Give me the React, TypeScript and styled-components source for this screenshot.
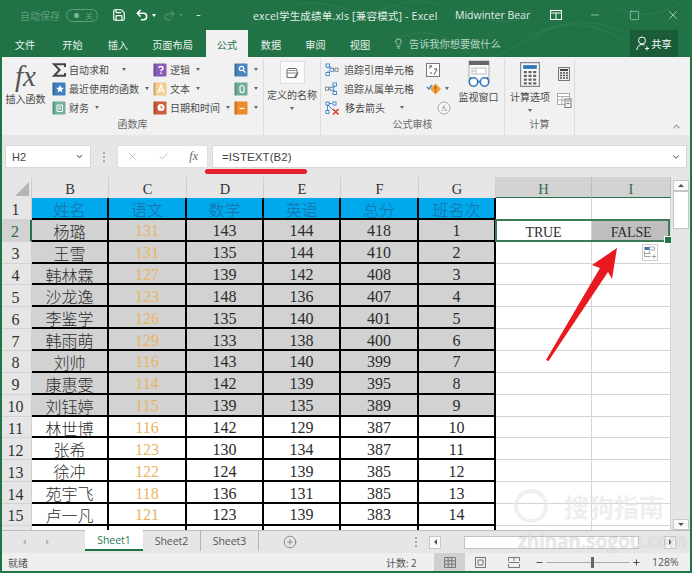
import React from "react";
import styled, { createGlobalStyle } from "styled-components";
import { ChevronDown, ChevronUp, CirclePlus, Lightbulb, Minus, Plus, Save, Undo2, Redo2, X, Check, Square } from "lucide-react";

const UI = `"Noto Sans CJK SC", "Noto Sans", sans-serif`;
const CELL = `"Liberation Serif", "Noto Sans CJK SC", serif`;

const Global = createGlobalStyle`
  html, body { margin: 0; padding: 0; width: 692px; height: 573px; overflow: hidden; background: #217346; }
  * { box-sizing: border-box; }
`;

const Win = styled.div`
  position: relative; width: 692px; height: 573px; background: #217346; padding: 0 2px 2px;
  display: flex; flex-direction: column; overflow: hidden; font-family: ${UI}; color: #444;
`;
const TitleBar = styled.div`
  position: relative; height: 30px; display: flex; align-items: center; color: #fff; font-size: 10.5px; flex: none;
`;
const Dim = styled.span<{ $ml?: number }>`
  color: #5f9d7c; margin-left: ${p => p.$ml ?? 0}px; font-size: 10px; display: inline-flex; align-items: center;
`;
const Toggle = styled.span`
  margin-left: 6px; width: 32px; height: 13px; border: 1px solid #5f9d7c; border-radius: 7px;
  display: inline-flex; align-items: center; padding-left: 7px; gap: 6px; color: #5f9d7c; font-size: 8px;
  &::before { content: ""; width: 5px; height: 5px; background: #7fb598; border-radius: 50%; }
`;
const Qat = styled.span<{ $ml: number; $off?: boolean }>`
  margin-left: ${p => p.$ml}px; display: inline-flex; align-items: center; color: ${p => p.$off ? "#4f9270" : "#fff"}; width: 14px; height: 16px; justify-content: center; flex: none;
`;
const DocTitle = styled.span<{ $w: number; $ml: number }>`
  font-family: "Open Sans", "Noto Sans CJK SC", sans-serif; font-size: 10.5px; color: #e4efe9; white-space: nowrap; flex: none; width: ${p => p.$w}px; margin-left: ${p => p.$ml}px; letter-spacing: .2px;
`;
const User = styled(DocTitle)` letter-spacing: 0; `;
const Swirl = styled.svg`
  position: absolute; left: 230px; top: 0; width: 460px; height: 57px; pointer-events: none;
`;

const TabBar = styled.div`
  height: 27px; display: flex; align-items: stretch; flex: none; color: #fff; font-size: 10.2px; position: relative;
`;
const Tab = styled.div<{ $w: number; $on?: boolean }>`
  width: ${p => p.$w}px; display: flex; align-items: center; justify-content: center; flex: none;
  color: ${p => p.$on ? "#217346" : "#e8f1ec"}; background: ${p => p.$on ? "#f1f1f1" : "transparent"};
  padding-top: 1px;
`;
const Tell = styled.div`
  margin-left: 10px; display: flex; align-items: center; gap: 5px; color: #b9d6c6; font-size: 10.2px; flex: none;
`;
const Share = styled.div`
  margin-left: auto; margin-right: 12px; width: 48px; background: #1a5c38; display: flex; align-items: center; justify-content: center; gap: 2px; color: #fff;
`;

const Ribbon = styled.div`
  height: 78px; background: #f1f1f1; flex: none; display: flex; position: relative; font-size: 10px; color: #4a4a4a; white-space: nowrap;
`;
const Group = styled.div<{ $w: number; $line?: boolean }>`
  width: ${p => p.$w}px; flex: none; display: flex; flex-direction: column; height: 76px;
  border-right: ${p => p.$line ? "1px solid #dcdcdc" : "none"}; margin-top: 2px;
`;
const GroupBody = styled.div`
  flex: 1; display: flex; min-height: 0;
`;
const GroupLabel = styled.div`
  height: 18px; text-align: center; color: #6a6a6a; font-size: 10px; line-height: 14px; flex: none;
`;
const BigBtn = styled.div<{ $w: number }>`
  width: ${p => p.$w}px; flex: none; display: flex; flex-direction: column; align-items: center; line-height: 13px;
`;
const BigLabel = styled.span<{ $mt: number }>`
  margin-top: ${p => p.$mt}px;
`;
const DownCaret = styled.span`
  width: 0; height: 0; border: 2px solid transparent; border-top: 3px solid #666; border-bottom: 0; margin-top: 6px;
`;
const Fx = styled.span`
  font-family: "Liberation Serif", serif; font-style: italic; font-size: 29px; color: #555; line-height: 33px; height: 32px; margin-top: 1px;
`;
const IconSlot = styled.div<{ $h: number }>`
  height: ${p => p.$h}px; display: flex; align-items: center; justify-content: center; flex: none;
`;
const Col = styled.div<{ $w: number; $ml?: number }>`
  width: ${p => p.$w}px; margin-left: ${p => p.$ml ?? 0}px; flex: none; display: flex; flex-direction: column; padding-top: 1px;
`;
const Item = styled.div<{ $gap?: number }>`
  height: 19px; display: flex; align-items: center; gap: ${p => p.$gap ?? 3}px; flex: none;
`;
const IconGap = styled.span<{ $ml?: number }>`
  margin-left: ${p => p.$ml ?? 7}px; display: inline-flex; align-items: center; flex: none;
`;
const Caret = styled.span<{ $ml?: number; $c?: string }>`
  width: 0; height: 0; border: 2px solid transparent; border-top: 3px solid ${p => p.$c ?? "#666"}; border-bottom: 0;
  margin-left: ${p => p.$ml ?? 3}px; flex: none; display: inline-block;
`;
const NameBtn = styled.div`
  width: 25px; height: 23px; background: #fafafa; border: 1px solid #dedede; display: flex; align-items: center; justify-content: center; margin-top: 2px;
`;
const Collapse = styled.div`
  position: absolute; right: 8px; bottom: 3px; color: #555; display: flex;
`;

const FormulaBar = styled.div`
  position: relative; height: 42px; background: #e6e6e6; flex: none; display: flex; padding: 10px 3px 9px 3px; font-size: 11px;
`;
const NameBox = styled.div`
  width: 86px; background: #fff; border: 1px solid #d8d8d8; display: flex; align-items: center; justify-content: space-between; padding: 0 6px; color: #444; font-family: "Liberation Sans", sans-serif; font-size: 11px;
`;
const Grip = styled.div`
  width: 26px; display: flex; align-items: center; justify-content: center; color: #999; font-size: 10px; letter-spacing: 0;
  &::before { content: ""; width: 2px; height: 10px; background: repeating-linear-gradient(#aaa 0 2px, transparent 2px 4px); }
`;
const FxBox = styled.div`
  width: 91px; background: #fff; border: 1px solid #e0e0e0; display: flex; align-items: center; padding: 0 9px; justify-content: space-between; color: #bcbcbc;
`;
const FxMini = styled.span`
  font-family: "Liberation Serif", serif; font-style: italic; color: #666; font-size: 12px;
`;
const Input = styled.div`
  flex: 1; margin-left: 4px; background: #fff; border: 1px solid #d8d8d8; display: flex; align-items: center; justify-content: space-between; padding: 0 5px 0 9px; color: #444;
  font-family: "Liberation Sans", sans-serif; font-size: 11.5px; letter-spacing: .1px;
`;
const RedLine = styled.div`
  position: absolute; left: 203px; bottom: 3px; width: 102px; height: 5px; border-radius: 3px; background: #e3202b;
`;

const SheetWrap = styled.div`
  flex: 1; min-height: 0; display: flex; background: #e6e6e6;
`;
const Grid = styled.div`
  width: 669px; flex: none; display: grid; overflow: hidden; background: #fff; position: relative;
  grid-template-columns: 30px 77px 78px 77px 77px 78px 77px 96px 79px;
  grid-template-rows: 21px;
  grid-auto-rows: 21.86px;
  font-family: ${CELL}; font-size: 16px; color: #2c2c2c;
`;
const Corner = styled.div`
  background: #e6e6e6; position: relative; border-right: 1px solid #cfcfcf;
  &::after { content: ""; position: absolute; right: 2px; bottom: 2px; border-style: solid; border-width: 0 0 14px 14px; border-color: transparent transparent #b5b5b5 transparent; }
`;
const ColHead = styled.div<{ $on?: boolean }>`
  background: ${p => p.$on ? "#d2d2d2" : "#e6e6e6"}; color: ${p => p.$on ? "#2f6b4c" : "#333"};
  border-right: 1px solid ${p => p.$on ? "#bcbcbc" : "#cfcfcf"};
  border-bottom: ${p => p.$on ? "1px solid #217346" : "none"};
  font-size: 14.5px; display: flex; align-items: center; justify-content: center; padding-top: 4px;
`;
const RowHead = styled.div<{ $on?: boolean }>`
  background: ${p => p.$on ? "#d2d2d2" : "#e6e6e6"}; color: ${p => p.$on ? "#2f6b4c" : "#333"};
  border-right: ${p => p.$on ? "2px solid #217346" : "1px solid #cfcfcf"};
  border-bottom: 1px solid #d2d2d2;
  display: flex; align-items: center; justify-content: center; padding: 4px 2px 0 0;
`;
const Cell = styled.div<{ $bg: string; $fg?: string; $cjk?: boolean }>`
  background: ${p => p.$bg}; color: ${p => p.$fg ?? "#2c2c2c"};
  border-right: 2px solid #000; border-bottom: 2px solid #000;
  display: flex; align-items: center; justify-content: center; white-space: nowrap;
  padding-top: ${p => p.$cjk ? 2 : 3}px;
  font-family: ${p => p.$cjk ? UI : CELL}; font-weight: ${p => p.$cjk ? 300 : 400}; line-height: 1;
`;
const Free = styled.div<{ $bg?: string }>`
  position: relative;
  background: ${p => p.$bg ?? "#fff"}; border-right: 1px solid #d4d4d4; border-bottom: 1px solid #d4d4d4;
  display: flex; align-items: center; justify-content: center; font-size: 14px; letter-spacing: -.2px; padding-top: 5px;
`;
const Selection = styled.div`
  position: absolute; left: -1px; top: -1px; width: 175px; height: 23px; z-index: 2; border: 2px solid #3c7a5a; pointer-events: none;
  &::after { content: ""; position: absolute; right: -4px; bottom: -4px; width: 6px; height: 6px; background: #217346; border: 1px solid #fff; }
`;

const VBar = styled.div`
  flex: 1; display: flex; flex-direction: column; padding: 3px 1px 0 2px; background: #e6e6e6;
`;
const ScrollBtn = styled.div`
  width: 100%; height: 11px; background: #fafafa; border: 1px solid #c8c8c8; display: flex; align-items: center; justify-content: center; flex: none;
`;
const Thumb = styled.div`
  height: 38px; background: #fff; border: 1px solid #c4c4c4; flex: none;
`;
const Arrow = styled.span<{ $d: "u" | "d" | "l" | "r" }>`
  width: 0; height: 0; border: 3px solid transparent;
  ${p => p.$d === "u" ? "border-bottom: 3px solid #555; border-top: 0;" : p.$d === "d" ? "border-top: 3px solid #555; border-bottom: 0;" : p.$d === "l" ? "border-right: 3px solid #555; border-left: 0;" : "border-left: 3px solid #555; border-right: 0;"}
`;
const Spacer = styled.div` flex: 1; `;

const TabsRow = styled.div`
  height: 23px; flex: none; background: #e6e6e6; display: flex; align-items: stretch; border-top: 1px solid #bdbdbd; font-size: 10.5px; font-family: "Open Sans", sans-serif; color: #555;
`;
const Nav = styled.div`
  width: 83px; flex: none; display: flex; align-items: center; padding-left: 21px; gap: 20px;
`;
const NavArrow = styled(Arrow)` opacity: .35; `;
const SheetTab = styled.div<{ $on?: boolean }>`
  width: 58px; display: flex; align-items: center; justify-content: center; flex: none; height: 21px; margin-top: -1px;
  background: ${p => p.$on ? "#fff" : "transparent"}; color: ${p => p.$on ? "#2b7a52" : "#555"};
  border-bottom: ${p => p.$on ? "2px solid #217346" : "none"};
  border-right: ${p => p.$on ? "none" : "1px solid #b5b5b5"};
`;
const AddSheet = styled.div`
  margin-left: 24px; display: flex; align-items: center; color: #666;
`;
const HScroll = styled.div`
  margin-left: auto; width: 278px; display: flex; align-items: center; padding: 0 14px 0 0; flex: none;
`;
const HDots = styled(Grip)` width: 8px; height: 12px; margin-right: 9px; flex: none; `;
const HBtn = styled.div`
  width: 12px; height: 13px; background: #fafafa; border: 1px solid #c8c8c8; display: flex; align-items: center; justify-content: center; flex: none;
`;
const HThumb = styled.div`
  margin-left: 23px; width: 175px; height: 13px; background: #fff; border: 1px solid #c4c4c4; flex: none;
`;

const Status = styled.div`
  height: 18px; flex: none; background: #efefef; display: flex; align-items: center; font-size: 10px; color: #555; padding-left: 6px; white-space: nowrap;
`;
const Count = styled.span`
  margin-left: 358px; width: 48px; flex: none;
`;
const ViewBtn = styled.div<{ $on?: boolean; $w: number }>`
  width: ${p => p.$w}px; height: 18px; flex: none; display: flex; align-items: center; justify-content: center; background: ${p => p.$on ? "#d0d0d0" : "transparent"}; color: #777;
`;
const Zoom = styled.div`
  margin-left: 2px; width: 106px; flex: none; display: flex; align-items: center; position: relative; color: #444;
`;
const Track = styled.div`
  position: relative; flex: 1; height: 1px; background: #aaa; margin: 0 2px;
  &::after { content: ""; position: absolute; left: 45px; top: -5px; width: 3px; height: 11px; background: #666; }
`;
const Percent = styled.span`
  margin-left: 11px; font-family: "Open Sans", sans-serif; font-size: 10.5px;
`;

const Mark = styled.div`
  position: absolute; left: 514px; top: 488px; display: flex; align-items: center; gap: 16px; color: rgba(228,228,228,.6); font-size: 25px; font-weight: 700; letter-spacing: 0; pointer-events: none; z-index: 3;
`;
const MarkRing = styled.span`
  width: 34px; height: 34px; border-radius: 50%; border: 4px solid rgba(228,228,228,.55); flex: none;
`;
const MarkUrl = styled.div`
  position: absolute; left: 518px; top: 528px; color: rgba(255,255,255,.7); text-shadow: 0 0 1px rgba(0,0,0,.3); font-family: "Open Sans", sans-serif; font-size: 19px; font-weight: 600; letter-spacing: .2px; pointer-events: none; z-index: 3;
`;
const Red = styled.svg`
  position: absolute; left: 540px; top: 244px; width: 84px; height: 122px; z-index: 4; pointer-events: none;
`;
const PasteOpt = styled.svg`
  position: absolute; left: 642px; top: 244px; width: 16px; height: 17px; z-index: 3;
`;

/* ---------- drawings ---------- */
const Book = ({ c, kind }: { c: string; kind: string }) => (
  <svg width="14" height="14" viewBox="0 0 14 14" style={{ flex: "none" }}>
    <rect x="0.5" y="0.5" width="13" height="13" rx="1" fill={c} />
    <rect x="0.5" y="0.5" width="2" height="13" fill="#000" opacity=".18" />
    {kind === "star" && <path d="M8 3l1.2 2.6 2.6.3-2 1.8.6 2.7L8 9l-2.4 1.4.6-2.7-2-1.8 2.6-.3z" fill="#fff" />}
    {kind === "lines" && <path d="M5 4h5.500v6.500H5zM6.300 6h3M6.300 8h3" fill="none" stroke="#fff" strokeWidth="1" />}
    {kind === "q" && <path d="M6 5c0-2 4-2 4 0 0 1.600-2 1.600-2 3.200M8 9.500v1.600" fill="none" stroke="#fff" strokeWidth="1.500" />}
    {kind === "a" && <path d="M5 11l3-8 3 8M6 8.500h4" fill="none" stroke="#fff" strokeWidth="1.300" />}
    {kind === "clock" && <g><circle cx="8" cy="6.500" r="3.500" fill="#fff" /><path d="M8 4.500v2.300h1.600" fill="none" stroke={c} strokeWidth="1" /></g>}
    {kind === "find" && <g fill="none" stroke="#fff" strokeWidth="1.200"><circle cx="7.500" cy="5.500" r="2.200" /><path d="M9 7.200l2.400 2.400" /></g>}
    {kind === "theta" && <rect x="6" y="3.500" width="4" height="7" rx="2" fill="none" stroke="#fff" strokeWidth="1.100" />}
    {kind === "dash" && <path d="M5.500 7.500h5" stroke="#fff" strokeWidth="1.300" />}
  </svg>
);
const Sigma = () => (
  <svg width="14" height="14" viewBox="0 0 14 14" style={{ flex: "none" }}>
    <path d="M13 4V1.200H2L7.600 7 2 12.800H13V10" fill="none" stroke="#444" strokeWidth="2" />
  </svg>
);
const TraceA = () => (
  <svg width="14" height="14" viewBox="0 0 14 14" style={{ flex: "none" }}>
    <g fill="#fff" stroke="#3b7fc4" strokeWidth=".9"><rect x="1" y="1" width="3.500" height="3" /><rect x="1" y="9.500" width="3.500" height="3" /><rect x="5" y="5.200" width="3.500" height="3" /><rect x="10" y="5.200" width="3" height="3" stroke="#777" /></g>
    <path d="M3 4v1.500M3 9.500V8M4.500 3 6 5" stroke="#3b7fc4" strokeWidth=".9" />
  </svg>
);
const TraceB = () => (
  <svg width="14" height="14" viewBox="0 0 14 14" style={{ flex: "none" }}>
    <g fill="#fff" stroke="#3b7fc4" strokeWidth=".9"><rect x="8" y="1" width="3.500" height="3" /><rect x="8" y="9.500" width="3.500" height="3" /><rect x="5" y="5.200" width="3.500" height="3" /><rect x="0.600" y="5.200" width="3" height="3" stroke="#777" /></g>
    <path d="M9.500 4v1.500M9.500 9.500V8" stroke="#3b7fc4" strokeWidth=".9" />
  </svg>
);
const RemoveArrows = () => (
  <svg width="15" height="14" viewBox="0 0 15 14" style={{ flex: "none" }}>
    <g fill="#fff" stroke="#3b7fc4" strokeWidth=".9"><rect x="1" y="1" width="3" height="3" /><rect x="1" y="9.500" width="3" height="3" /><rect x="8" y="1" width="3" height="3" /></g>
    <path d="M3 4l5 5M7 2.500H4M2.500 4v5" stroke="#3b7fc4" strokeWidth=".9" />
    <path d="M8 8l5.500 5.500M13.500 8 8 13.500" stroke="#d8432b" strokeWidth="1.600" />
  </svg>
);
const NameIcon = () => (
  <svg width="16" height="16" viewBox="0 0 16 16">
    <path d="M4 3.500h8l1 2v5l-1 2H3V5z" fill="#fff" stroke="#666" />
    <path d="M3 8h9.500M4.500 5.500h7" stroke="#888" />
    <path d="M10 12l3.500-5 1 1-3 5z" fill="#777" />
  </svg>
);
const ShowFormula = () => (
  <svg width="14" height="14" viewBox="0 0 14 14">
    <rect x=".5" y=".5" width="13" height="13" fill="#fff" stroke="#777" />
    <path d="M3 3h3M3 5.500 6 3M8 6h3l-3 6M4 10h2" stroke="#555" fill="none" />
  </svg>
);
const ErrCheck = () => (
  <svg width="16" height="14" viewBox="0 0 16 14">
    <path d="M1 5l2 2 3-4" fill="none" stroke="#3b7fc4" strokeWidth="1.300" />
    <path d="M9.500 1.500 15 7l-5.500 5.500L4 7z" fill="#f0a030" />
    <path d="M9.500 4v3.500M9.500 8.800v1.400" stroke="#c2392b" strokeWidth="1.300" />
  </svg>
);
const EvalFx = () => (
  <svg width="14" height="14" viewBox="0 0 14 14">
    <circle cx="7" cy="7" r="6" fill="#f7f7f7" stroke="#aaa" />
    <path d="M4.500 10c2 .5 1.500-5 3.500-6.500M5 6.500h3.500M7.500 7.500l2.500 2.500M10 7.500l-2.500 2.500" fill="none" stroke="#999" strokeWidth=".8" />
  </svg>
);
const Watch = () => (
  <svg width="24" height="28" viewBox="0 0 24 28">
    <rect x="2" y="1" width="20" height="21" fill="#fafafa" stroke="#aaa" />
    <rect x="2" y="1" width="20" height="4" fill="#666" />
    <rect x="5" y="8" width="14" height="6" fill="#fff" stroke="#bbb" />
    <path d="M9 8v6M5 11h4" stroke="#bbb" />
    <circle cx="6.500" cy="22" r="4.200" fill="#fff" stroke="#2f77bb" strokeWidth="1.500" />
    <circle cx="17.500" cy="22" r="4.200" fill="#fff" stroke="#2f77bb" strokeWidth="1.500" />
    <path d="M10.700 21.500h2.600M2.500 20 4 17M21.500 20 20 17" stroke="#2f77bb" strokeWidth="1.300" fill="none" />
  </svg>
);
const Calc = ({ s }: { s: number }) => (
  <svg width={s * 0.8} height={s} viewBox="0 0 16 20">
    <rect x=".5" y=".5" width="15" height="19" fill="#fafafa" stroke="#888" />
    <rect x="2.500" y="2.500" width="11" height="3" fill="#2f77bb" />
    <path d="M3 8h2.500M6.800 8h2.500M10.500 8H13M3 11h2.500M6.800 11h2.500M10.500 11H13M3 14h2.500M6.800 14h2.500M10.500 14H13M3 17h2.500M6.800 17h2.500M10.500 17H13" stroke="#666" strokeWidth="1.800" />
  </svg>
);
const CalcSheet = () => (
  <svg width="15" height="15" viewBox="0 0 15 15">
    <rect x=".5" y=".5" width="12" height="11" fill="#fff" stroke="#aaa" />
    <path d="M.5 3.500h12M.5 7h12M5 3.500v8" stroke="#aaa" />
    <rect x="8" y="6" width="6" height="8.500" fill="#f5f5f5" stroke="#777" />
    <path d="M9.500 8h3M9.500 10.500h3" stroke="#777" />
  </svg>
);
const SmallCalc = () => (
  <svg width="12" height="14" viewBox="0 0 12 14">
    <rect x=".5" y=".5" width="11" height="13" fill="#eee" stroke="#777" />
    <rect x="2" y="2" width="8" height="2" fill="#444" />
    <path d="M2 6h2M5 6h2M8 6h2M2 8.500h2M5 8.500h2M8 8.500h2M2 11h2M5 11h2M8 11h2" stroke="#555" strokeWidth="1.400" />
  </svg>
);
const RibbonMode = () => (
  <svg width="12" height="10" viewBox="0 0 12 10" fill="none" stroke="#fff">
    <rect x=".5" y=".5" width="11" height="9" />
    <line x1=".5" y1="3" x2="11.500" y2="3" />
    <line x1="6" y1="3" x2="6" y2="9.500" />
  </svg>
);

/* ---------- data ---------- */
const rows: [string, number, number, number, number, number][] = [
  ["杨璐", 131, 143, 144, 418, 1], ["王雪", 131, 135, 144, 410, 2], ["韩林霖", 127, 139, 142, 408, 3],
  ["沙龙逸", 123, 148, 136, 407, 4], ["李鉴学", 126, 135, 140, 401, 5], ["韩雨萌", 129, 133, 138, 400, 6],
  ["刘帅", 116, 143, 140, 399, 7], ["康惠雯", 114, 142, 139, 395, 8], ["刘钰婷", 115, 139, 135, 389, 9],
  ["林世博", 116, 142, 129, 387, 10], ["张希", 123, 130, 134, 387, 11], ["徐冲", 122, 124, 139, 385, 12],
  ["苑宇飞", 118, 136, 131, 385, 13], ["卢一凡", 121, 123, 139, 383, 14],
];
const heads = ["姓名", "语文", "数学", "英语", "总分", "班名次"];
const BLUE = "#00a8ec";
const GRAY = "#d2d2d2";

export default function App() {
  return (
    <Win>
      <Global />
      <TitleBar>
        <Dim $ml={18}>自动保存</Dim>
        <Toggle>关</Toggle>
        <Qat $ml={14}><Save size={14} strokeWidth={2} /></Qat>
        <Qat $ml={9}><Undo2 size={14} strokeWidth={2.600} /></Qat>
        <Caret $ml={3} $c="#fff" />
        <Qat $ml={6} $off><Redo2 size={13} /></Qat>
        <Caret $ml={3} $c="#4f9270" />
        <Qat $ml={8}><Minus size={5} strokeWidth={4} /></Qat>
        <DocTitle $w={199} $ml={48}>excel学生成绩单.xls [兼容模式] - Excel</DocTitle>
        <User $w={92} $ml={3}>Midwinter Bear</User>
        <Qat $ml={2}><RibbonMode /></Qat>
        <Qat $ml={25}><Minus size={12} strokeWidth={1} /></Qat>
        <Qat $ml={25}><Square size={11} strokeWidth={1} /></Qat>
        <Qat $ml={25}><X size={14} strokeWidth={1} /></Qat>
        <Swirl viewBox="0 0 460 57" fill="none" stroke="#3a8560" strokeWidth="1" opacity=".55">
          <path d="M60 8c30-16 60 12 90 2s30-12 60-4M150 54c20-30 60-24 80-6s40 8 60-6 60-30 100-10" />
          <path d="M230 4c20 20 50 24 70 6M300 40c20-20 60-20 90 0M380 4c20 14 40 14 70-2" />
        </Swirl>
      </TitleBar>

      <TabBar>
        <Tab $w={46}>文件</Tab>
        <Tab $w={49}>开始</Tab>
        <Tab $w={42}>插入</Tab>
        <Tab $w={67}>页面布局</Tab>
        <Tab $w={42} $on>公式</Tab>
        <Tab $w={46}>数据</Tab>
        <Tab $w={43}>审阅</Tab>
        <Tab $w={46}>视图</Tab>
        <Tell><Lightbulb size={11} />告诉我你想要做什么</Tell>
        <Share>
          <svg width="13" height="15" viewBox="0 0 13 15" fill="none" stroke="#fff" strokeWidth="1"><circle cx="6" cy="4.500" r="3.500" /><path d="M.8 14c.5-3.500 2.500-5.500 5.200-5.500 1 0 2 .3 2.700.8M9 12.500h4M11 10.500v4" /></svg>
          共享
        </Share>
      </TabBar>

      <Ribbon>
        <Group $w={262} $line>
          <GroupBody>
            <BigBtn $w={47}>
              <Fx>fx</Fx>
              <span>插入函数</span>
            </BigBtn>
            <Col $w={101} $ml={3}>
              <Item><Sigma />自动求和<Caret $ml={10} /></Item>
              <Item><Book c="#3f7fc0" kind="star" />最近使用的函数<Caret /></Item>
              <Item><Book c="#6fb39a" kind="lines" />财务<Caret /></Item>
            </Col>
            <Col $w={81}>
              <Item><Book c="#8a5bb8" kind="q" />逻辑<Caret /></Item>
              <Item><Book c="#f3d08a" kind="a" />文本<Caret /></Item>
              <Item><Book c="#cf5a3c" kind="clock" />日期和时间<Caret /></Item>
            </Col>
            <Col $w={28}>
              <Item><Book c="#4a86bd" kind="find" /><Caret /></Item>
              <Item><Book c="#72ad97" kind="theta" /><Caret /></Item>
              <Item><Book c="#ee8a2a" kind="dash" /><Caret /></Item>
            </Col>
          </GroupBody>
          <GroupLabel>函数库</GroupLabel>
        </Group>
        <Group $w={57} $line>
          <GroupBody>
            <BigBtn $w={56}>
              <NameBtn><NameIcon /></NameBtn>
              <BigLabel $mt={4}>定义的名称</BigLabel>
              <DownCaret />
            </BigBtn>
          </GroupBody>
        </Group>
        <Group $w={184} $line>
          <GroupBody>
            <Col $w={131} $ml={4}>
              <Item $gap={5}><TraceA />追踪引用单元格<IconGap><ShowFormula /></IconGap></Item>
              <Item $gap={5}><TraceB />追踪从属单元格<IconGap><ErrCheck /><Caret /></IconGap></Item>
              <Item $gap={5}><RemoveArrows />移去箭头<Caret $ml={10} /><IconGap $ml={28}><EvalFx /></IconGap></Item>
            </Col>
            <BigBtn $w={45}>
              <IconSlot $h={30}><Watch /></IconSlot>
              <BigLabel $mt={1}>监视窗口</BigLabel>
            </BigBtn>
          </GroupBody>
          <GroupLabel>公式审核</GroupLabel>
        </Group>
        <Group $w={70} $line>
          <GroupBody>
            <BigBtn $w={50}>
              <IconSlot $h={30}><Calc s={25} /></IconSlot>
              <BigLabel $mt={1}>计算选项</BigLabel>
              <DownCaret />
            </BigBtn>
            <Col $w={18}>
              <IconSlot $h={27}><SmallCalc /></IconSlot>
              <IconSlot $h={27}><CalcSheet /></IconSlot>
            </Col>
          </GroupBody>
          <GroupLabel>计算</GroupLabel>
        </Group>
        <Collapse><ChevronUp size={11} strokeWidth={2} /></Collapse>
      </Ribbon>

      <FormulaBar>
        <NameBox>H2<ChevronDown size={9} strokeWidth={3} color="#777" /></NameBox>
        <Grip />
        <FxBox><X size={11} /><Check size={11} /><FxMini>fx</FxMini></FxBox>
        <Input>=ISTEXT(B2)<ChevronDown size={10} strokeWidth={2.500} color="#666" /></Input>
        <RedLine />
      </FormulaBar>

      <SheetWrap>
        <Grid>
          <Corner />
          {["B", "C", "D", "E", "F", "G"].map(c => <ColHead key={c}>{c}</ColHead>)}
          <ColHead $on>H</ColHead>
          <ColHead $on>I</ColHead>

          <RowHead>1</RowHead>
          {heads.map(h => <Cell key={h} $bg={BLUE} $fg="#1d6ea6" $cjk>{h}</Cell>)}
          <Free />
          <Free />

          {rows.map((r, i) => {
            const bg = i < 9 ? GRAY : "#fff";
            return (
              <React.Fragment key={i}>
                <RowHead $on={i === 0}>{i + 2}</RowHead>
                <Cell $bg={bg} $cjk>{r[0]}</Cell>
                <Cell $bg={bg} $fg="#e9b566">{r[1]}</Cell>
                <Cell $bg={bg}>{r[2]}</Cell>
                <Cell $bg={bg}>{r[3]}</Cell>
                <Cell $bg={bg}>{r[4]}</Cell>
                <Cell $bg={bg}>{r[5]}</Cell>
                <Free>{i === 0 ? "TRUE" : ""}{i === 0 && <Selection />}</Free>
                <Free $bg={i === 0 ? "#bfbfbf" : undefined}>{i === 0 ? "FALSE" : ""}</Free>
              </React.Fragment>
            );
          })}
          <RowHead />
          {[0, 1, 2, 3, 4, 5].map(i => <Cell key={i} $bg="#fff" />)}
          <Free />
          <Free />
        </Grid>
        <VBar>
          <ScrollBtn><Arrow $d="u" /></ScrollBtn>
          <Thumb />
          <Spacer />
          <ScrollBtn><Arrow $d="d" /></ScrollBtn>
        </VBar>
      </SheetWrap>

      <TabsRow>
        <Nav><NavArrow $d="l" /><NavArrow $d="r" /></Nav>
        <SheetTab $on>Sheet1</SheetTab>
        <SheetTab>Sheet2</SheetTab>
        <SheetTab>Sheet3</SheetTab>
        <AddSheet><CirclePlus size={14} strokeWidth={1.200} /></AddSheet>
        <HScroll>
          <HDots />
          <HBtn><Arrow $d="l" /></HBtn>
          <HThumb />
          <Spacer />
          <HBtn><Arrow $d="r" /></HBtn>
        </HScroll>
      </TabsRow>

      <Status>
        就绪
        <Count>计数: 2</Count>
        <ViewBtn $on $w={31}><svg width="12" height="11" viewBox="0 0 12 11" fill="none" stroke="#777"><path d="M.5.500h11v10H.5zM.5 3.800h11M.5 7.200h11M4.200.500v10M7.800.500v10" /></svg></ViewBtn>
        <ViewBtn $w={30}><svg width="11" height="11" viewBox="0 0 11 11" fill="none" stroke="#777"><path d="M.5.500h10v10H.5zM3 3h5v5H3z" /></svg></ViewBtn>
        <ViewBtn $w={38}><svg width="12" height="11" viewBox="0 0 12 11" fill="none" stroke="#777"><path d="M.5 4V.500h11V4M.5 7v3.500h11V7M6 .500V4M.5 5.500h11" /></svg></ViewBtn>
        <Zoom><Minus size={9} strokeWidth={2.500} /><Track /><Plus size={9} strokeWidth={2.500} /></Zoom>
        <Percent>128%</Percent>
      </Status>

      <Mark><MarkRing />搜狗指南</Mark>
      <MarkUrl>zhinan.sogou.com</MarkUrl>
      <PasteOpt viewBox="0 0 16 17">
        <rect x=".5" y=".5" width="15" height="16" fill="#fff" stroke="#cfcfcf" />
        <rect x="2.500" y="3" width="5" height="3" fill="#3f6fb0" />
        <rect x="7.500" y="3" width="5" height="3" fill="#fff" stroke="#8a8a8a" strokeWidth=".7" />
        <path d="M2.500 7v5.500h6M2.500 9.500h6M7.500 7v2.500M10 12.500h4M12 10.500v4" fill="none" stroke="#8a8a8a" strokeWidth=".8" />
      </PasteOpt>
      <Red viewBox="540 244 84 122">
        <path d="M617 248 592 265 600 268 546 360 548.500 361 608 272 612 279Z" fill="#e8191f" />
      </Red>
    </Win>
  );
}
